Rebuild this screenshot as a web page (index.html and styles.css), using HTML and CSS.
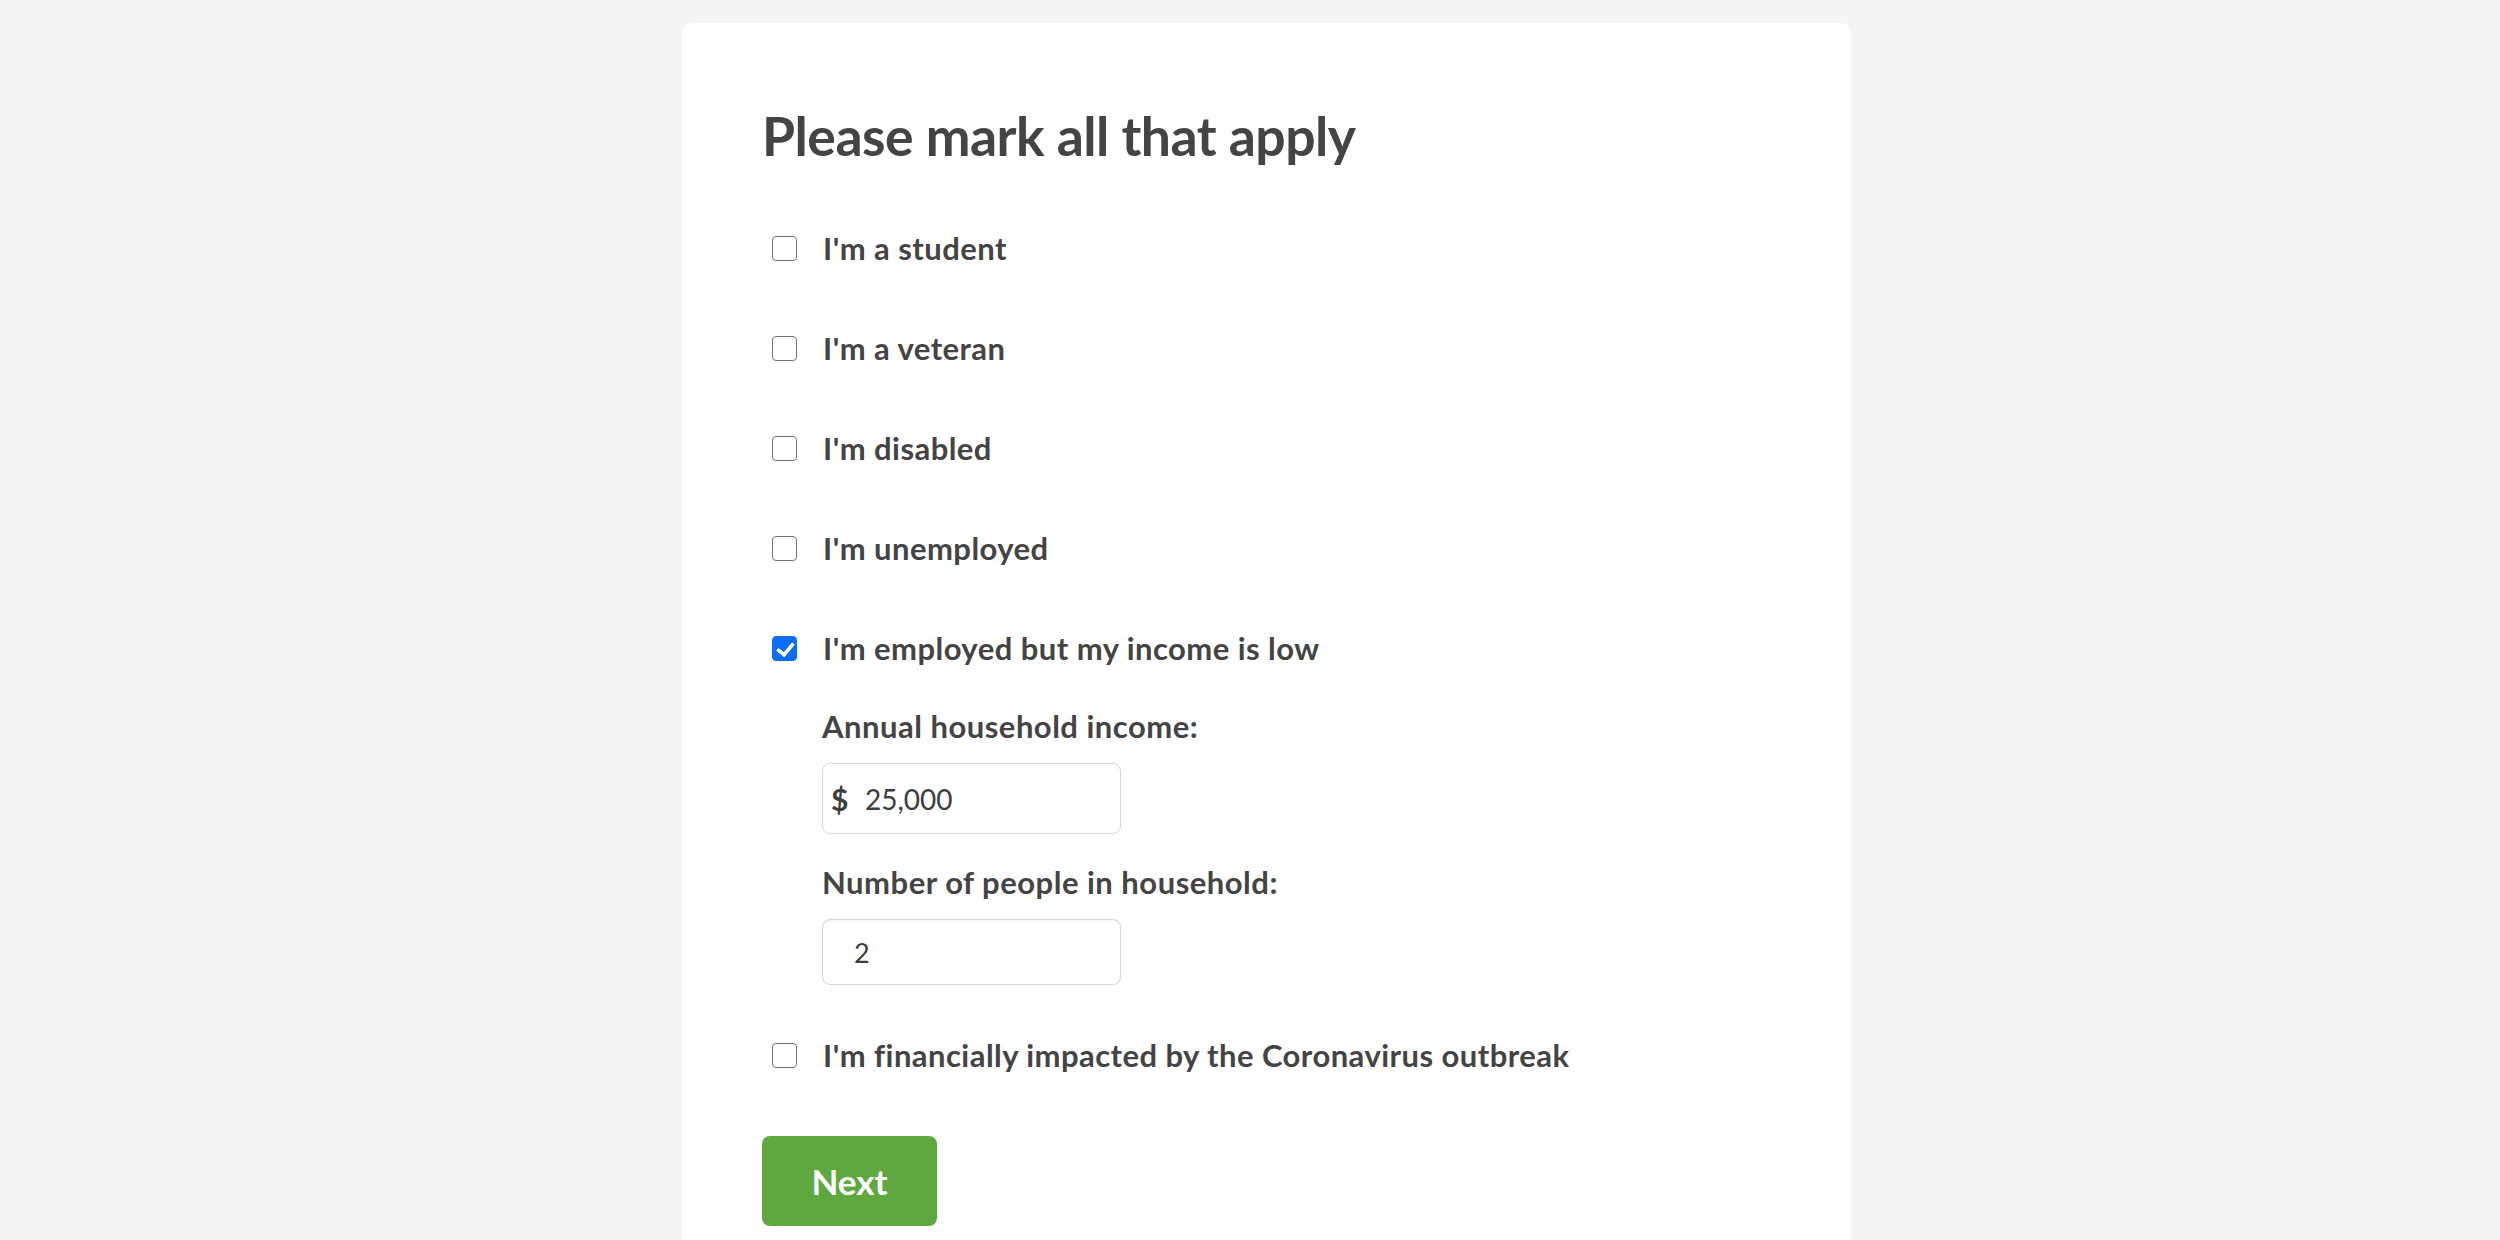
FILE: index.html
```html
<!DOCTYPE html>
<html lang="en">
<head>
<meta charset="utf-8">
<title>Please mark all that apply</title>
<link rel="stylesheet" href="styles.css">
</head>
<body>
<main class="card">
  <h1 class="title">Please mark all that apply</h1>
  <form class="form">
    <div class="option">
      <label class="option-row"><input type="checkbox" class="check"><span class="option-text">I'm a student</span></label>
    </div>
    <div class="option">
      <label class="option-row"><input type="checkbox" class="check"><span class="option-text">I'm a veteran</span></label>
    </div>
    <div class="option">
      <label class="option-row"><input type="checkbox" class="check"><span class="option-text">I'm disabled</span></label>
    </div>
    <div class="option">
      <label class="option-row"><input type="checkbox" class="check"><span class="option-text">I'm unemployed</span></label>
    </div>
    <div class="option option-open">
      <label class="option-row"><input type="checkbox" class="check" checked><span class="option-text">I'm employed but my income is low</span></label>
      <div class="details">
        <label class="field-label" for="income">Annual household income:</label>
        <div class="money-field">
          <span class="currency">$</span>
          <input id="income" class="money-input" type="text" value="25,000">
        </div>
        <label class="field-label field-label-second" for="people">Number of people in household:</label>
        <input id="people" class="text-input" type="text" value="2">
      </div>
    </div>
    <div class="option">
      <label class="option-row"><input type="checkbox" class="check"><span class="option-text">I'm financially impacted by the Coronavirus outbreak</span></label>
    </div>
    <button type="button" class="next-btn">Next</button>
  </form>
</main>
</body>
</html>
```
FILE: styles.css
```css
html, body {
  margin: 0;
  padding: 0;
  background: #f5f5f5;
}
body {
  font-family: Lato, "Open Sans", "Liberation Sans", sans-serif;
  color: #444444;
  overflow: hidden;
}
.card {
  box-sizing: border-box;
  width: 1169px;
  min-height: 1400px;
  margin: 23px 0 0 682px;
  padding: 80px 80px 0 80px;
  background: #ffffff;
  border-radius: 10px;
}
.title {
  margin: 0 0 59px 0;
  font-size: 53.5px;
  line-height: 64px;
  font-weight: 700;
  letter-spacing: -0.5px;
  color: #444444;
}
.form {
  display: flex;
  flex-direction: column;
}
.option {
  margin-bottom: 55px;
}
.option-open {
  margin-bottom: 48px;
}
.option-row {
  display: flex;
  align-items: center;
  height: 45px;
  font-size: 31px;
  line-height: 45px;
  font-weight: 700;
  letter-spacing: 0.45px;
  cursor: pointer;
}
.check {
  -webkit-appearance: none;
  appearance: none;
  position: relative;
  box-sizing: border-box;
  width: 25px;
  height: 25px;
  margin: 0 26px 0 10px;
  flex: none;
  border: 1.6px solid #767676;
  border-radius: 4px;
  background: #ffffff;
  cursor: pointer;
}
.check:checked {
  background: #0d6efd;
  border-color: #0d6efd;
}
.check:checked::after {
  content: "";
  position: absolute;
  left: 6.5px;
  top: 1.5px;
  width: 6.5px;
  height: 13px;
  border-right: 4px solid #ffffff;
  border-bottom: 4px solid #ffffff;
  border-radius: 1px;
  transform: rotate(40deg);
}
.details {
  display: flex;
  flex-direction: column;
  align-items: flex-start;
  padding: 33px 0 0 60px;
}
.field-label {
  font-size: 31px;
  line-height: 45px;
  font-weight: 700;
  letter-spacing: 0.5px;
  margin-bottom: 14px;
}
.field-label-second {
  margin-top: 26px;
}
.money-field {
  box-sizing: border-box;
  display: flex;
  align-items: center;
  width: 299px;
  height: 71px;
  padding-left: 8px;
  border: 1.5px solid #d6d6d6;
  border-radius: 8px;
  background: #fff;
}
.currency {
  font-size: 30px;
  font-weight: 700;
  color: #3d3d3d;
  width: 34px;
  flex: none;
}
.money-input {
  flex: 1;
  min-width: 0;
  border: 0;
  outline: 0;
  padding: 0;
  font-family: inherit;
  font-size: 28px;
  color: #3d3d3d;
  background: transparent;
}
.text-input {
  box-sizing: border-box;
  width: 299px;
  height: 66px;
  padding: 0 0 0 31px;
  border: 1.5px solid #d6d6d6;
  border-radius: 8px;
  box-shadow: inset 0 1px 2px rgba(0,0,0,0.06);
  font-family: inherit;
  font-size: 27px;
  color: #3d3d3d;
  outline: 0;
}
.next-btn {
  align-self: flex-start;
  width: 175px;
  height: 90px;
  margin-top: 3px;
  border: 0;
  border-radius: 8px;
  background: #5ea83f;
  color: #ffffff;
  font-family: inherit;
  font-size: 35px;
  font-weight: 700;
  cursor: pointer;
}
```
